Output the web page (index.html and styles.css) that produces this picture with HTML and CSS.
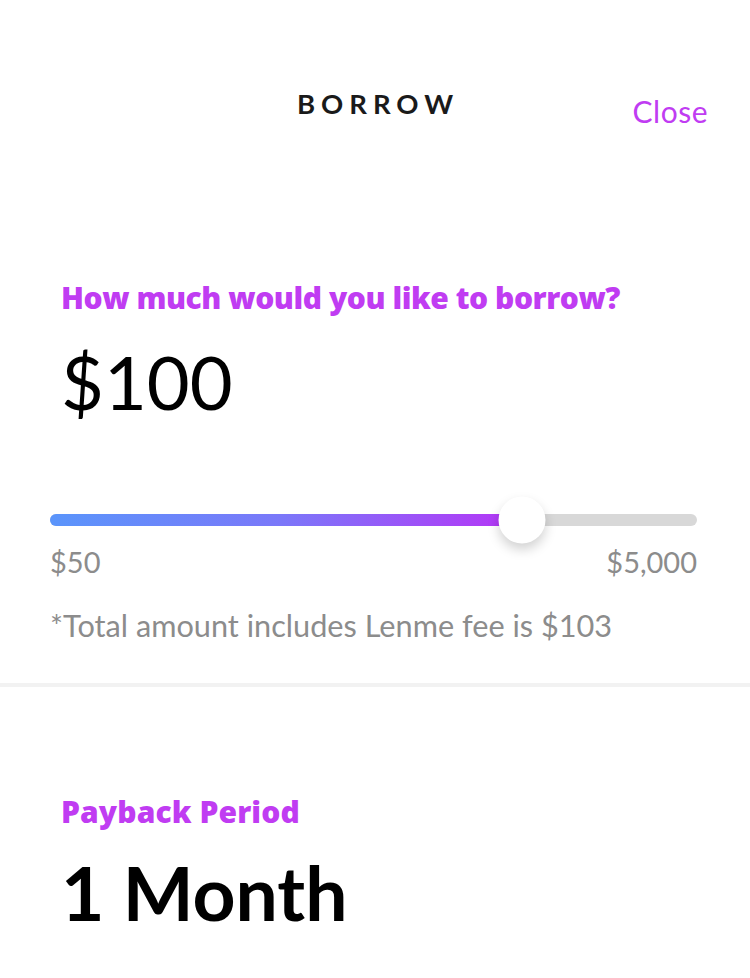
FILE: index.html
```html
<!DOCTYPE html>
<html>
<head>
<meta charset="utf-8">
<link rel="stylesheet" href="styles.css">
</head>
<body>
<div class="screen">
  <header class="topbar">
    <div class="side"></div>
    <h1 class="title">BORROW</h1>
    <div class="side right"><a class="close">Close</a></div>
  </header>

  <section class="amount-section">
    <div class="label">How much would you like to borrow?</div>
    <div class="amount">$100</div>
    <div class="slider">
      <div class="track">
        <div class="fill" style="width: 70.5%"></div>
        <div class="thumb" style="left: 73%"></div>
      </div>
    </div>
    <div class="range">
      <span>$50</span>
      <span>$5,000</span>
    </div>
    <p class="note">*Total amount includes Lenme fee is $103</p>
  </section>

  <div class="divider"></div>

  <section class="period-section">
    <div class="label label-wide">Payback Period</div>
    <div class="period">1 Month</div>
  </section>
</div>
</body>
</html>
```

FILE: styles.css
```css
html, body {
  margin: 0;
  padding: 0;
  background: #ffffff;
}
body {
  font-family: Lato, "Noto Sans", sans-serif;
  width: 750px;
  height: 978px;
  overflow: hidden;
}
.screen {
  display: flex;
  flex-direction: column;
}
.topbar {
  display: grid;
  grid-template-columns: 1fr auto 1fr;
  align-items: start;
  padding: 86px 42px 0 42px;
}
.title {
  margin: 0;
  font-family: Lato, sans-serif;
  font-weight: 700;
  font-size: 27.5px;
  letter-spacing: 6px;
  color: #1a1a1a;
  line-height: 36px;
  padding-left: 6px;
}
.side.right {
  display: flex;
  justify-content: flex-end;
}
.close {
  font-family: Lato, sans-serif;
  font-size: 30px;
  letter-spacing: 0.5px;
  color: #c03cf2;
  line-height: 36px;
  margin-top: 7px;
}
.amount-section {
  padding: 0 53px 0 50px;
  margin-top: 151px;
}
.label {
  font-family: "Open Sans", sans-serif;
  font-weight: 800;
  font-size: 30px;
  color: #c03cf2;
  line-height: 36px;
  padding-left: 11px;
  letter-spacing: -0.45px;
}
.label-wide {
  letter-spacing: 0.1px;
}
.amount {
  font-family: Lato, sans-serif;
  font-size: 74px;
  color: #000;
  line-height: 80px;
  margin-top: 26px;
  padding-left: 11px;
}
.slider {
  margin-top: 92px;
}
.track {
  position: relative;
  height: 12px;
  border-radius: 6px;
  background: #d8d8d8;
}
.fill {
  height: 100%;
  border-radius: 6px 0 0 6px;
  background: linear-gradient(100deg, #5a95fb 0%, #7a78f9 50%, #b338f6 100%);
}
.thumb {
  position: absolute;
  top: 50%;
  width: 47px;
  height: 47px;
  border-radius: 50%;
  background: #fff;
  transform: translate(-50%, -50%);
  box-shadow: 0 6px 12px rgba(0, 0, 0, 0.18);
}
.range {
  display: flex;
  justify-content: space-between;
  margin-top: 18px;
  font-size: 29px;
  color: #8c8c8c;
  line-height: 36px;
}
.note {
  margin: 28px 0 0 0;
  font-size: 30.7px;
  color: #8c8c8c;
  line-height: 36px;
}
.divider {
  height: 4px;
  background: #f2f2f2;
  margin-top: 39px;
}
.period-section {
  padding: 0 50px;
  margin-top: 107px;
}
.period {
  font-family: Lato, sans-serif;
  font-weight: 700;
  font-size: 75px;
  color: #000;
  line-height: 80px;
  margin-top: 22px;
  padding-left: 11px;
}
```
